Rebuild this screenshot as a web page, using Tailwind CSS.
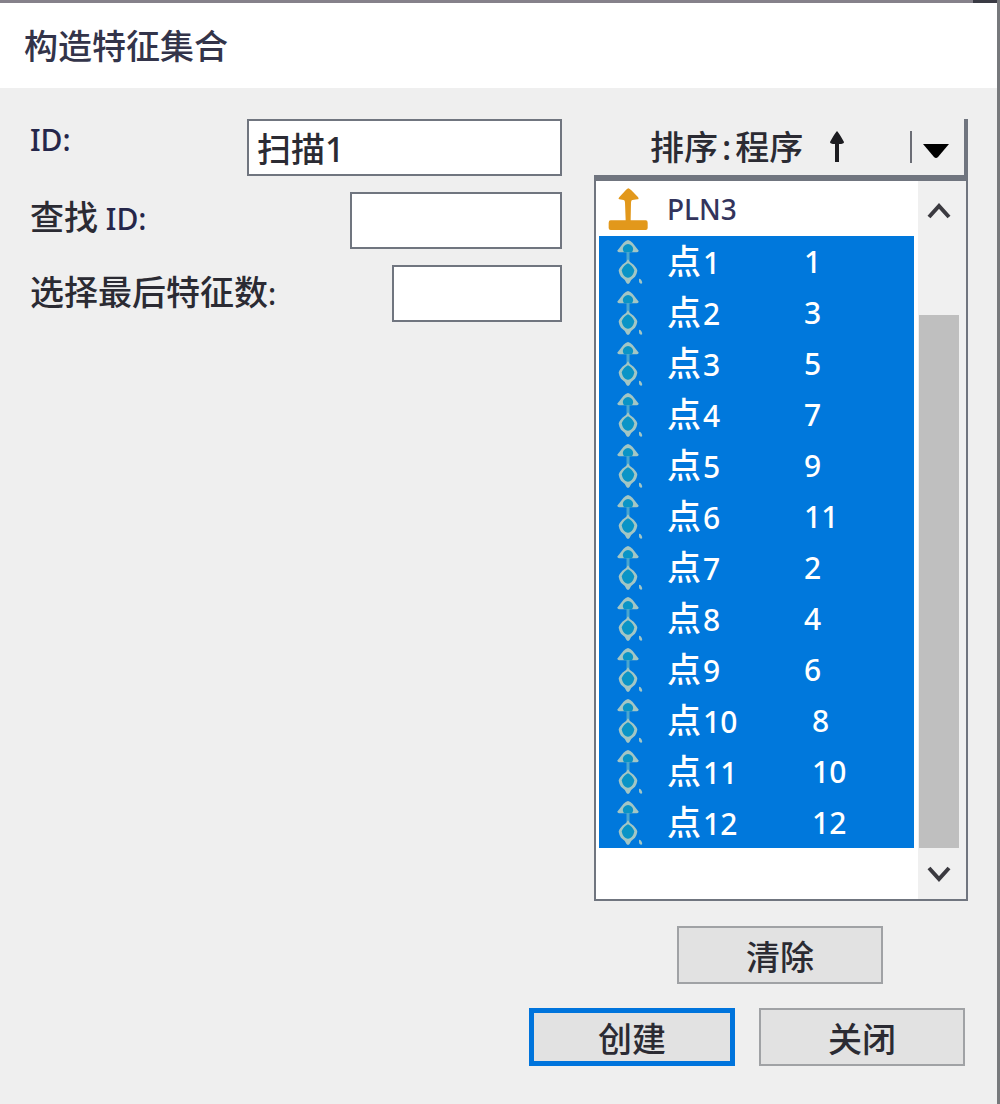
<!DOCTYPE html>
<html lang="zh-CN">

<head>
  <meta charset="UTF-8" />
  <meta name="viewport" content="width=device-width, initial-scale=1.0" />
  <title>构造特征集合</title>
  <script src="https://cdn.jsdelivr.net/npm/@tailwindcss/browser@4"></script>
</head>

<body class="bg-[#efefef] font-['Noto_Sans','Noto_Sans_CJK_SC',sans-serif] text-[30px] leading-[34px] font-medium text-[#2b2b33]">
  <div class="min-h-screen border-r-3 border-[#77797c]">
    <div class="flex h-[3px] bg-[#85818a]">
      <span class="ml-auto w-6 bg-[#3a3b44]"></span>
    </div>
    <header class="flex h-[85px] items-center bg-white px-6">
      <h1 class="text-[34px] text-[#33344a]">构造特征集合</h1>
    </header>

    <form class="pt-[31px] pr-[29px] pb-9 pl-[30px]">
      <div class="flex gap-8">
        <!-- Campos -->
        <div class="flex flex-1 flex-col gap-4">
          <div class="flex items-start justify-between">
            <label for="feature-id" class="pt-1 text-[#25264a]">ID:</label>
            <input id="feature-id" type="text" value="扫描1" class="h-[57px] w-[315px] border-2 border-[#70757f] bg-white px-2 text-[34px]" />
          </div>
          <div class="flex items-start justify-between">
            <label for="search-id" class="pt-2"><span class="text-[34px]">查找</span> <span class="text-[#25264a]">ID:</span></label>
            <input id="search-id" type="text" class="h-[57px] w-[212px] border-2 border-[#70757f] bg-white px-2" />
          </div>
          <div class="flex items-start justify-between">
            <label for="last-count" class="pt-[10px]"><span class="text-[34px]">选择最后特征数</span>:</label>
            <input id="last-count" type="text" class="h-[57px] w-[170px] border-2 border-[#70757f] bg-white px-2" />
          </div>
        </div>

        <!-- Lista -->
        <div class="w-[374px]">
          <div class="flex h-14 items-center border-r-4 border-[#70757f] pl-14">
            <button type="button" class="flex flex-1 items-center text-[34px]">
              <span>排序</span><span class="mx-1">:</span><span>程序</span>
              <svg class="ml-6 h-8 w-5" viewBox="0 0 20 32" fill="#1c1c20"><path d="M10 0Q12 2 17 11Q17 13 12 13V31H8V13Q3 13 3 11Q8 2 10 0Z" /></svg>
            </button>
            <button type="button" aria-label="排序选项" class="flex h-8 w-[54px] items-center border-l-2 border-[#6b6d75] pl-[10px]">
              <svg class="mt-2 h-4 w-7" viewBox="0 0 28 16"><path d="M1 1H27L16 14Q14 16 12 14Z" /></svg>
            </button>
          </div>
          <div class="flex border-2 border-t-6 border-[#70757f] bg-white">
            <div class="flex-1 pr-1 pb-[51px] pl-[3px]">
              <table class="w-full border-collapse">
                <tbody id="feature-list">
                  <tr class="h-[55px]">
                    <td class="w-[68px] pl-2">
                      <svg class="h-[45px] w-[42px]" viewBox="0 0 126 135" fill="#e2981b">
                        <path d="M64 7Q68 8 73 13L92 32Q98 39 91 40L76 42Q72 43 72 50L71 103H116Q122 103 122 110V126Q122 132 116 132H11Q5 132 5 126V110Q5 103 11 103H56L54 50Q54 43 50 42L37 40Q32 38 38 32L56 13Q60 8 64 7Z" />
                      </svg>
                    </td>
                    <td colspan="2" class="text-[28px] text-[#33345c]">PLN3</td>
                  </tr>
                </tbody>
              </table>
            </div>
            <div class="flex w-12 flex-col items-center bg-[#f0f0f0] pr-[6px]">
              <button type="button" aria-label="向上" class="flex h-[60px] w-full items-center justify-center">
                <svg class="h-4 w-6" viewBox="0 0 24 16" fill="none" stroke="#3b3a40" stroke-width="4"><path d="M2 14L12 3L22 14" /></svg>
              </button>
              <div class="flex w-10 flex-1 flex-col justify-end">
                <div class="h-[533px] bg-[#bfbfbf]"></div>
              </div>
              <button type="button" aria-label="向下" class="flex h-[51px] w-full items-center justify-center">
                <svg class="h-4 w-6" viewBox="0 0 24 16" fill="none" stroke="#3b3a40" stroke-width="4"><path d="M2 2L12 13L22 2" /></svg>
              </button>
            </div>
          </div>
        </div>
      </div>

      <div class="mt-[25px] flex justify-end pr-[85px]">
        <button type="button" class="h-[58px] w-[206px] border-2 border-[#a0a2a5] bg-[#e2e2e2] pt-1 text-[34px]">清除</button>
      </div>
      <div class="mt-6 flex justify-end gap-6 pr-[3px]">
        <button type="submit" class="h-[58px] w-[206px] border-5 border-[#0074dc] bg-[#e2e2e2] pt-1 text-[34px]">创建</button>
        <button type="button" class="h-[58px] w-[206px] border-2 border-[#a0a2a5] bg-[#e2e2e2] pt-1 text-[34px]">关闭</button>
      </div>
    </form>
  </div>

  <script>
    const valores = [1, 3, 5, 7, 9, 11, 2, 4, 6, 8, 10, 12];
    const lista = document.getElementById("feature-list");

    valores.forEach((valor, i) => {
      const sangria = i >= 9 ? "pl-2" : "pl-0";
      lista.innerHTML += `
        <tr class="h-[51px] bg-[#0078dc] text-white">
          <td class="w-[68px] pl-[18px]">
            <svg class="h-12 w-[27px]" viewBox="0 0 81 144" fill="#a3c6c4">
              <path d="M33 40V70" stroke="#4aa6cf" stroke-width="9" />
              <path d="M33 6Q40 7 47 15L64 37Q66 43 60 43H6Q0 43 2 37L19 15Q26 7 33 6Z" />
              <path d="M21 43Q14 32 21 24Q33 12 45 24Q52 32 45 43Z" fill="#0a94c6" />
              <path d="M33 64Q38 75 50 80Q61 92 61 98Q60 106 54 116Q42 124 38 134Q33 141 28 134Q24 124 12 116Q6 106 5 98Q5 92 16 80Q28 75 33 64Z" />
              <path d="M33 76Q46 82 52 97Q49 112 40 117Q33 122 26 117Q17 112 14 97Q20 82 33 76Z" fill="#0a94c6" />
              <path d="M66 123Q70 121 74 128Q78 137 72 137Q65 137 66 123Z" />
            </svg>
          </td>
          <td class="w-[137px]"><span class="mr-[2px] text-[34px]">点</span>${i + 1}</td>
          <td class="${sangria}">${valor}</td>
        </tr>`;
    });
  </script>
</body>

</html>
